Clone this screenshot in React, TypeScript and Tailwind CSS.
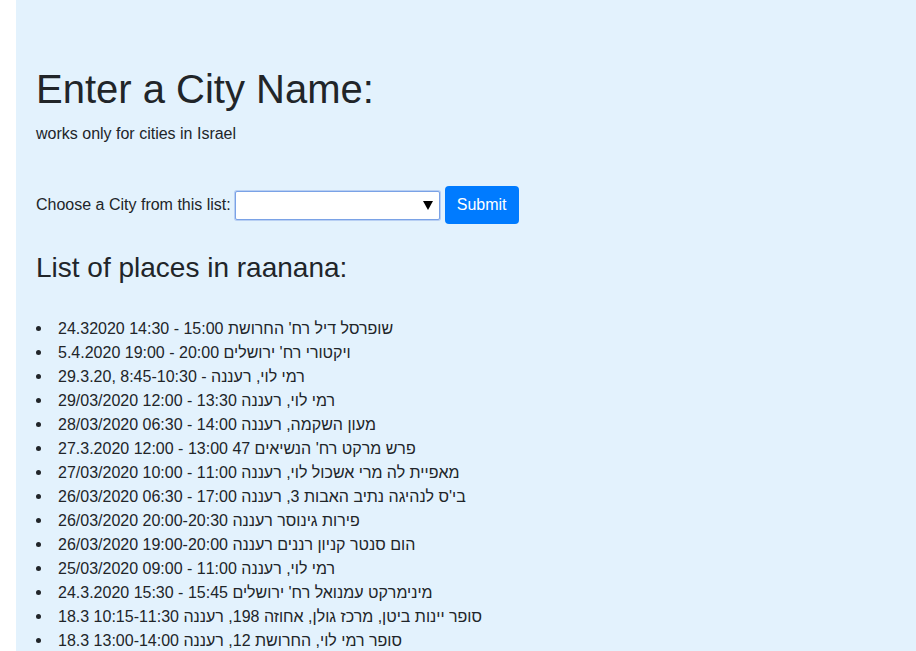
import { useState } from "react";

const places = [
  "24.32020 14:30 - 15:00 שופרסל דיל רח' החרושת",
  "5.4.2020 19:00 - 20:00 ויקטורי רח' ירושלים",
  "29.3.20, 8:45-10:30 - רמי לוי, רעננה",
  "29/03/2020 12:00 - 13:30 רמי לוי, רעננה",
  "28/03/2020 06:30 - 14:00 מעון השקמה, רעננה",
  "27.3.2020 12:00 - 13:00 פרש מרקט רח' הנשיאים 47",
  "27/03/2020 10:00 - 11:00 מאפיית לה מרי אשכול לוי, רעננה",
  "26/03/2020 06:30 - 17:00 בי'ס לנהיגה נתיב האבות 3, רעננה",
  "26/03/2020 20:00-20:30 פירות גינוסר רעננה",
  "26/03/2020 19:00-20:00 הום סנטר קניון רננים רעננה",
  "25/03/2020 09:00 - 11:00 רמי לוי, רעננה",
  "24.3.2020 15:30 - 15:45 מינימרקט עמנואל רח' ירושלים",
  "18.3 10:15-11:30 סופר יינות ביטן, מרכז גולן, אחוזה 198, רעננה",
  "18.3 13:00-14:00 סופר רמי לוי, החרושת 12, רעננה",
];

export default function App() {
  const [city, setCity] = useState("");

  return (
    <div className="flex min-h-screen font-['Liberation_Sans',Arial,sans-serif] text-[#212529]">
      <div className="w-4 shrink-0 bg-white" />
      <div className="flex-1 bg-[#e3f2fd] pl-5 pt-[65px] pb-6">
        <h1 className="text-[40px] leading-[48px] font-normal mb-[9px]">Enter a City Name:</h1>
        <p className="text-base leading-6">works only for cities in Israel</p>

        {/* City picker */}
        <form className="flex items-center mt-[40px]" onSubmit={(e) => e.preventDefault()}>
          <label className="text-base leading-6">Choose a City from this list:</label>
          <div className="relative ml-1">
            <select
              value={city}
              onChange={(e) => setCity(e.target.value)}
              className="appearance-none block w-[205px] h-[29px] bg-white border border-[#7aa2e6] rounded-[2px] shadow-[0_0_0_1px_rgba(130,165,230,0.45)] outline-none"
            >
              <option value=""></option>
              <option value="raanana">raanana</option>
            </select>
            <svg
              className="absolute right-[7px] top-[10px] pointer-events-none"
              width="10"
              height="9"
              viewBox="0 0 10 9"
            >
              <polygon points="0,0 10,0 5,9" fill="#000" />
            </svg>
          </div>
          <button
            type="submit"
            className="ml-[5px] h-[38px] px-3 bg-[#007bff] text-white text-base leading-6 rounded-[4px]"
          >
            Submit
          </button>
        </form>

        <h3 className="text-[28px] leading-[33.6px] font-normal mt-[27px]">List of places in raanana:</h3>

        <ul className="mt-8 text-base leading-6">
          {places.map((p, i) => (
            <li key={i} className="flex items-center">
              <span className="w-[5px] h-[5px] mr-[17px] shrink-0 rounded-full bg-[#212529]" />
              <span>{p}</span>
            </li>
          ))}
        </ul>
      </div>
    </div>
  );
}
